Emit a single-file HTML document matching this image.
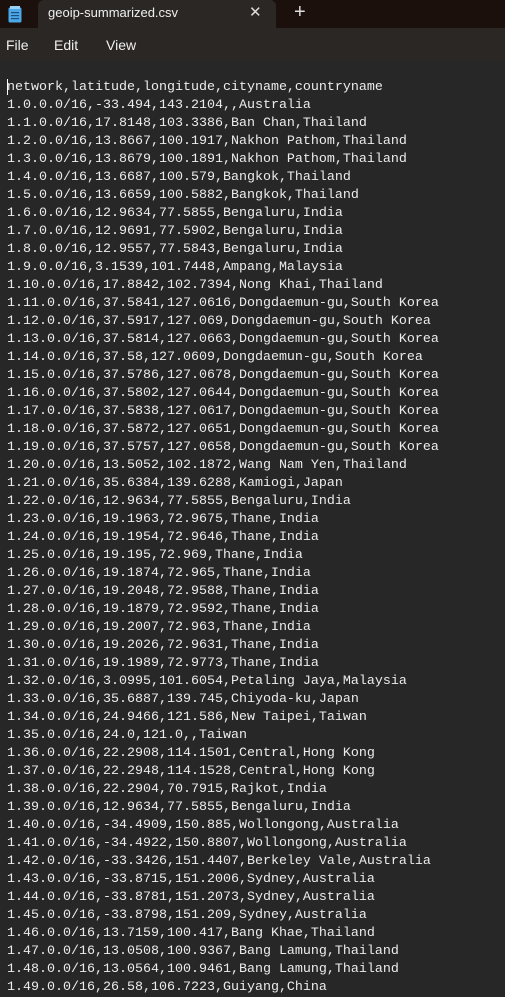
<!DOCTYPE html>
<html><head><meta charset="utf-8"><style>
html,body{margin:0;padding:0;width:505px;height:992px;overflow:hidden;background:#272727;}
.title{position:absolute;left:0;top:0;width:505px;height:28px;background:#1c100c;}
.tab{position:absolute;left:38px;top:0;width:238px;height:28px;background:#2b2724;border-radius:6px 6px 0 0;}
.tab .name{position:absolute;left:10px;top:5px;font:13px "Liberation Sans",sans-serif;color:#f0f0f0;}
.tab .x{position:absolute;left:211px;top:3px;font:15px "Liberation Sans",sans-serif;color:#ddd;}
.plus{position:absolute;left:294px;top:1px;font:20px "Liberation Sans",sans-serif;color:#ddd;}
.icon{position:absolute;left:8px;top:6px;}
.menu{position:absolute;left:0;top:28px;width:505px;height:33px;background:#2b2724;font:14px "Liberation Sans",sans-serif;color:#f0f0f0;}
.menu span{position:absolute;top:9px;}
pre{position:absolute;left:7px;top:79px;margin:0;font:13.33px/18px "Liberation Mono",monospace;color:#ececec;}
.cur{position:absolute;left:7px;top:79px;width:1px;height:16px;background:#fff;}
</style></head><body>
<div class="title">
<svg class="icon" width="14" height="17" viewBox="0 0 14 17"><rect x="0.5" y="1.5" width="13" height="15" rx="1.5" fill="#4aa8e8"/><rect x="2" y="0" width="10" height="3" fill="#9bd0f5"/><rect x="3" y="6" width="8" height="1.2" fill="#1f4f7a"/><rect x="3" y="9" width="8" height="1.2" fill="#1f4f7a"/><rect x="3" y="12" width="8" height="1.2" fill="#1f4f7a"/></svg>
<div class="tab"><span class="name">geoip-summarized.csv</span><span class="x">✕</span></div>
<span class="plus">+</span>
</div>
<div class="menu"><span style="left:6px">File</span><span style="left:54px">Edit</span><span style="left:106px">View</span></div>
<pre>network,latitude,longitude,cityname,countryname
1.0.0.0/16,-33.494,143.2104,,Australia
1.1.0.0/16,17.8148,103.3386,Ban Chan,Thailand
1.2.0.0/16,13.8667,100.1917,Nakhon Pathom,Thailand
1.3.0.0/16,13.8679,100.1891,Nakhon Pathom,Thailand
1.4.0.0/16,13.6687,100.579,Bangkok,Thailand
1.5.0.0/16,13.6659,100.5882,Bangkok,Thailand
1.6.0.0/16,12.9634,77.5855,Bengaluru,India
1.7.0.0/16,12.9691,77.5902,Bengaluru,India
1.8.0.0/16,12.9557,77.5843,Bengaluru,India
1.9.0.0/16,3.1539,101.7448,Ampang,Malaysia
1.10.0.0/16,17.8842,102.7394,Nong Khai,Thailand
1.11.0.0/16,37.5841,127.0616,Dongdaemun-gu,South Korea
1.12.0.0/16,37.5917,127.069,Dongdaemun-gu,South Korea
1.13.0.0/16,37.5814,127.0663,Dongdaemun-gu,South Korea
1.14.0.0/16,37.58,127.0609,Dongdaemun-gu,South Korea
1.15.0.0/16,37.5786,127.0678,Dongdaemun-gu,South Korea
1.16.0.0/16,37.5802,127.0644,Dongdaemun-gu,South Korea
1.17.0.0/16,37.5838,127.0617,Dongdaemun-gu,South Korea
1.18.0.0/16,37.5872,127.0651,Dongdaemun-gu,South Korea
1.19.0.0/16,37.5757,127.0658,Dongdaemun-gu,South Korea
1.20.0.0/16,13.5052,102.1872,Wang Nam Yen,Thailand
1.21.0.0/16,35.6384,139.6288,Kamiogi,Japan
1.22.0.0/16,12.9634,77.5855,Bengaluru,India
1.23.0.0/16,19.1963,72.9675,Thane,India
1.24.0.0/16,19.1954,72.9646,Thane,India
1.25.0.0/16,19.195,72.969,Thane,India
1.26.0.0/16,19.1874,72.965,Thane,India
1.27.0.0/16,19.2048,72.9588,Thane,India
1.28.0.0/16,19.1879,72.9592,Thane,India
1.29.0.0/16,19.2007,72.963,Thane,India
1.30.0.0/16,19.2026,72.9631,Thane,India
1.31.0.0/16,19.1989,72.9773,Thane,India
1.32.0.0/16,3.0995,101.6054,Petaling Jaya,Malaysia
1.33.0.0/16,35.6887,139.745,Chiyoda-ku,Japan
1.34.0.0/16,24.9466,121.586,New Taipei,Taiwan
1.35.0.0/16,24.0,121.0,,Taiwan
1.36.0.0/16,22.2908,114.1501,Central,Hong Kong
1.37.0.0/16,22.2948,114.1528,Central,Hong Kong
1.38.0.0/16,22.2904,70.7915,Rajkot,India
1.39.0.0/16,12.9634,77.5855,Bengaluru,India
1.40.0.0/16,-34.4909,150.885,Wollongong,Australia
1.41.0.0/16,-34.4922,150.8807,Wollongong,Australia
1.42.0.0/16,-33.3426,151.4407,Berkeley Vale,Australia
1.43.0.0/16,-33.8715,151.2006,Sydney,Australia
1.44.0.0/16,-33.8781,151.2073,Sydney,Australia
1.45.0.0/16,-33.8798,151.209,Sydney,Australia
1.46.0.0/16,13.7159,100.417,Bang Khae,Thailand
1.47.0.0/16,13.0508,100.9367,Bang Lamung,Thailand
1.48.0.0/16,13.0564,100.9461,Bang Lamung,Thailand
1.49.0.0/16,26.58,106.7223,Guiyang,China</pre>
<div class="cur"></div>
</body></html>
